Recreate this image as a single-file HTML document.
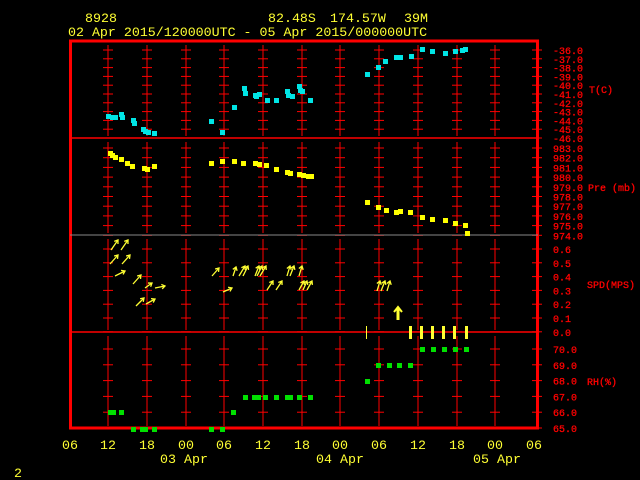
<!DOCTYPE html>
<html><head><meta charset="utf-8"><style>
html,body{margin:0;padding:0;background:#000;width:640px;height:480px;overflow:hidden}
svg{display:block}
text{font-family:"Liberation Mono",monospace}
</style></head><body>
<svg width="640" height="480" viewBox="0 0 640 480">
<g fill="#ffff33" style="font-size:13.3px">
<text x="85" y="22">8928</text>
<text x="268" y="22">82.48S</text>
<text x="330" y="22">174.57W</text>
<text x="404" y="22">39M</text>
<text x="68" y="36">02 Apr 2015/120000UTC - 05 Apr 2015/000000UTC</text>
<g text-anchor="middle">
<text x="70" y="449">06</text><text x="108" y="449">12</text><text x="147" y="449">18</text><text x="186" y="449">00</text><text x="224" y="449">06</text><text x="263" y="449">12</text><text x="302" y="449">18</text><text x="340" y="449">00</text><text x="379" y="449">06</text><text x="418" y="449">12</text><text x="457" y="449">18</text><text x="495" y="449">00</text><text x="534" y="449">06</text>
<text x="184" y="463">03 Apr</text><text x="340" y="463">04 Apr</text><text x="497" y="463">05 Apr</text>
</g>
<text x="14" y="477">2</text>
</g>
<g id="grid" stroke="#f00" stroke-width="1"></g>
<rect x="70.5" y="41" width="467" height="387" fill="none" stroke="#f00" stroke-width="3"/>
<line x1="70" y1="138" x2="538" y2="138" stroke="#f00" stroke-width="1.5"/>
<line x1="70" y1="235" x2="538" y2="235" stroke="#888" stroke-width="1"/>
<line x1="70" y1="332" x2="538" y2="332" stroke="#f00" stroke-width="1.5"/>
<g id="labels" fill="#f00" stroke="#f00" stroke-width="0.3" style="font-size:10px"></g>
<g fill="#f00" stroke="#f00" stroke-width="0.3" style="font-size:10px">
<text x="589" y="93">T(C)</text><text x="588" y="191">Pre (mb)</text><text x="587" y="288">SPD(MPS)</text><text x="587" y="385">RH(%)</text>
</g>
<g id="pts"></g>
<g stroke="#ffff33" stroke-width="1.3" fill="none" id="arrows"></g>
<g fill="#ffff33">
<rect x="366" y="326" width="1" height="13"/>
<rect x="409" y="326" width="3" height="13"/><rect x="420" y="326" width="3" height="13"/><rect x="431" y="326" width="3" height="13"/><rect x="442" y="326" width="3" height="13"/><rect x="453" y="326" width="3" height="13"/><rect x="465" y="326" width="3" height="13"/>
</g>
<script>
var ns="http://www.w3.org/2000/svg";
function el(p,t,a){var e=document.createElementNS(ns,t);for(var k in a)e.setAttribute(k,a[k]);p.appendChild(e);return e;}
var g=document.getElementById('grid'),lb=document.getElementById('labels');
var cols=[108,147,186,224,263,302,340,379,418,457,495,537];
var T=[],P=[],S=[],R=[];
for(var i=0;i<=10;i++)T.push([50+i*8.8,(-36-i).toFixed(1)]);
for(var i=0;i<=9;i++)P.push([148+i*9.7,(983-i).toFixed(1)]);
for(var i=0;i<=6;i++)S.push([249+i*13.8,Math.abs((6-i)/10).toFixed(1)]);
for(var i=0;i<=5;i++)R.push([349+i*15.8,(70-i).toFixed(1)]);
var all=T.concat(P,S,R);
cols.forEach(function(x){
 [[45,136],[142,233],[239,330],[336,426]].forEach(function(s){el(g,'line',{x1:x,y1:s[0],x2:x,y2:s[1]});});
 all.forEach(function(r){el(g,'line',{x1:x-5,y1:r[0],x2:x+5,y2:r[0]});});
});
all.forEach(function(r){var t=el(lb,'text',{x:553,y:r[0]+4});t.textContent=r[1];});
var pts=document.getElementById('pts');
function sq(a,c){a.forEach(function(p){el(pts,'rect',{x:p[0]-2,y:p[1]-2,width:5,height:5,fill:c});});}
sq([[108,116],[112,117],[115,117],[121,114],[122,117],[133,120],[134,123],[143,129],[145,131],[148,132],[154,133],[211,121],[222,132],[234,107],[244,88],[245,93],[255,95],[256,96],[259,94],[267,100],[276,100],[287,91],[288,95],[292,96],[299,86],[300,90],[302,91],[310,100],[367,74],[378,67],[385,61],[396,57],[400,57],[411,56],[422,49],[432,51],[445,53],[455,51],[462,50],[465,49]],'#00e5e5');
sq([[110,153],[112,155],[115,157],[121,159],[127,163],[132,166],[144,168],[147,169],[154,166],[211,163],[222,161],[234,161],[243,163],[255,163],[259,164],[266,165],[276,169],[287,172],[290,173],[299,174],[303,175],[308,176],[311,176],[367,202],[378,207],[386,210],[396,212],[400,211],[410,212],[422,217],[432,219],[445,220],[455,223],[465,225],[467,233]],'#ffff00');
sq([[110,412],[113,412],[121,412],[233,412],[245,397],[254,397],[258,397],[265,397],[276,397],[287,397],[290,397],[299,397],[310,397],[367,381],[378,365],[389,365],[399,365],[410,365],[422,349],[433,349],[444,349],[455,349],[466,349],[133,429],[142,429],[145,429],[154,429],[211,429],[222,429]],'#00e000');
var ar=document.getElementById('arrows');
function arrow(x1,y1,x2,y2){el(ar,'line',{x1:x1,y1:y1,x2:x2,y2:y2});var a=Math.atan2(y2-y1,x2-x1);
 var h=4;el(ar,'polyline',{points:(x2-h*Math.cos(a-0.6))+','+(y2-h*Math.sin(a-0.6))+' '+x2+','+y2+' '+(x2-h*Math.cos(a+0.6))+','+(y2-h*Math.sin(a+0.6))});}
[[111,250,118,240],[121,250,128,240],[110,264,118,255],[122,264,130,255],[115,276,125,271],[133,284,141,275],[136,306,144,298],[145,288,152,283],[155,288,165,286],[146,304,155,299],[212,276,219,268],[223,292,232,288],[233,276,236,267],[239,276,245,266],[243,276,248,266],[255,276,259,266],[257,276,262,266],[260,276,266,266],[267,290,273,281],[276,290,282,281],[287,276,290,266],[290,276,294,266],[299,276,302,266],[299,290,304,281],[303,290,307,281],[307,290,312,281],[377,291,380,281],[381,291,385,281],[387,291,390,281]].forEach(function(a){arrow(a[0],a[1],a[2],a[3]);});
el(ar,'line',{x1:398,y1:320,x2:398,y2:308,'stroke-width':3});
el(ar,'polyline',{points:'394,312 398,307 402,312','stroke-width':2});
</script>
</svg>
</body></html>
